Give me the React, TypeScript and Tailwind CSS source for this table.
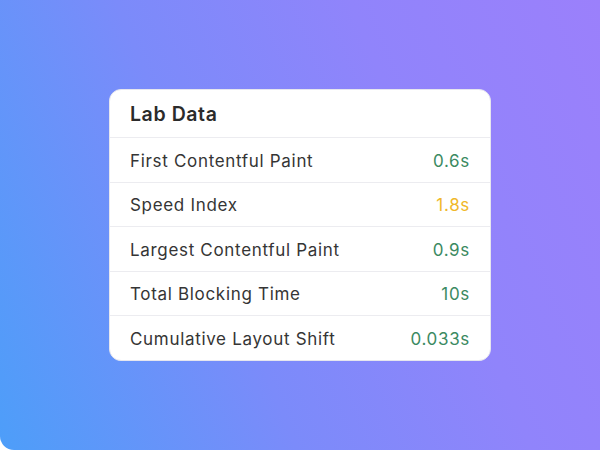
const rows = [
  { label: "First Contentful Paint", value: "0.6s", color: "text-[#3b8a62]" },
  { label: "Speed Index", value: "1.8s", color: "text-[#f0b82a]" },
  { label: "Largest Contentful Paint", value: "0.9s", color: "text-[#3b8a62]" },
  { label: "Total Blocking Time", value: "10s", color: "text-[#3b8a62]" },
  { label: "Cumulative Layout Shift", value: "0.033s", color: "text-[#3b8a62]" },
]

export default function App() {
  return (
    <div className="w-[600px] h-[450px] bg-white font-['Inter',sans-serif]">
      <div className="w-full h-full rounded-bl-[14px] bg-[linear-gradient(68deg,#4d9ef9_0%,#7b8bfa_38%,#9084fb_68%,#9b80fb_100%)] flex items-start justify-center pt-[89px]">
        <div className="w-[382px] bg-white rounded-[12px] border border-[#e6e6ee] overflow-hidden">
          <div className="h-[47px] pt-[2px] flex items-center px-5 text-[19.5px] font-semibold tracking-[0.03em] text-[#2b2b2b]">
            Lab Data
          </div>
          {rows.map((r) => (
            <div
              key={r.label}
              className="h-[44.6px] pt-[3px] flex items-center justify-between px-5 border-t border-[#ececf0] text-[17px] tracking-[0.04em] text-[#353535]"
            >
              <span>{r.label}</span>
              <span className={r.color}>{r.value}</span>
            </div>
          ))}
        </div>
      </div>
    </div>
  )
}
